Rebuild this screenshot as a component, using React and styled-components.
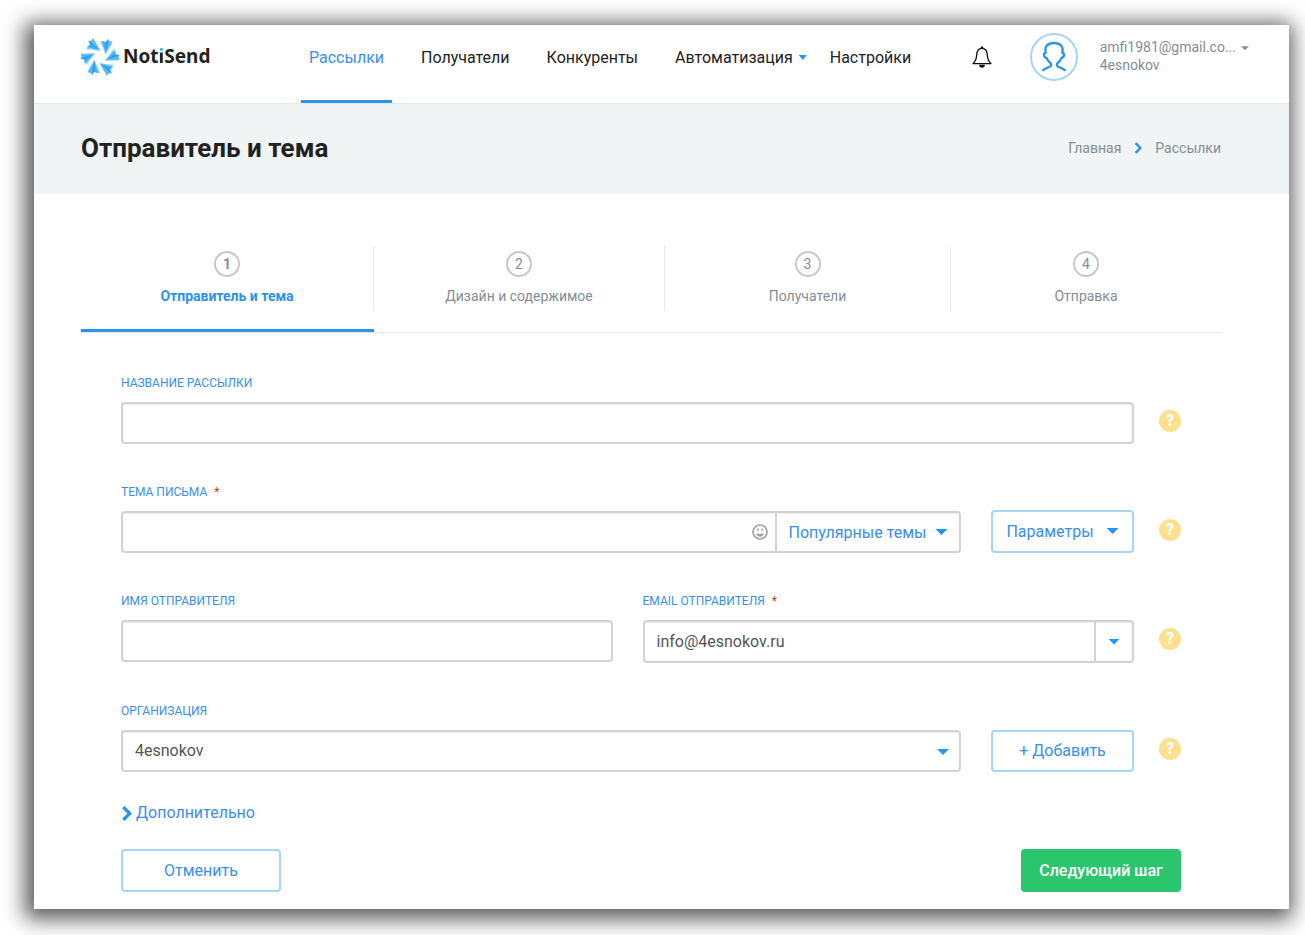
import { useState } from "react";
import styled, { createGlobalStyle } from "styled-components";

const colors = {
  blue: "#2b93e8",
  blueText: "#3a8fe8",
  blueLight: "#a6d5f8",
  dark: "#222222",
  gray: "#858e93",
  border: "#d0d4d6",
  line: "#e6e8ea",
  band: "#f0f4f5",
  green: "#2ac56c",
  yellow: "#fbe08e",
};

const NAV = [
  { title: "Рассылки", active: true },
  { title: "Получатели" },
  { title: "Конкуренты" },
  { title: "Автоматизация", dropdown: true },
  { title: "Настройки" },
];

const STEPS = [
  "Отправитель и тема",
  "Дизайн и содержимое",
  "Получатели",
  "Отправка",
];

const LogoMark = () => (
  <svg width="38" height="38" viewBox="-57 -57 114 114" aria-hidden="true">
    {[0, 60, 120, 180, 240, 300].map((angle) => (
      <g key={angle} transform={`rotate(${angle})`}>
        <path d="M17 -8 L0 -48 L11 -47 Z" fill="#7fd0fb" />
        <path d="M17 -8 L7 -49 L19 -44 Z" fill="#3aaef8" />
        <path d="M17 -8 L17 -45 L25 -55 L27 -44 Z" fill="#2b9cf2" />
        <path d="M17 -8 L25 -49 L38 -46 Z" fill="#55bdf9" />
      </g>
    ))}
  </svg>
);

const BellIcon = () => (
  <svg width="20" height="22" viewBox="0 0 60 66" fill="none" aria-hidden="true">
    <path
      d="M3 53 Q13 44 14 27 Q15 7 30 7 Q45 7 46 27 Q47 44 57 53 Z"
      stroke="#111"
      strokeWidth="4"
      strokeLinejoin="round"
    />
    <path d="M26 6 Q26 1 30 1 Q34 1 34 6 Z" fill="#111" />
    <path d="M21 56 H39 Q38 65 30 65 Q22 65 21 56 Z" fill="#111" />
  </svg>
);

const AvatarIcon = () => (
  <svg width="48" height="48" viewBox="0 0 144 144" fill="none" aria-hidden="true">
    <circle cx="72" cy="72" r="69" stroke={colors.blueLight} strokeWidth="6" />
    <path
      d="M37 113 Q44 107 58 102 Q68 97 60 89 Q52 82 50 75 Q41 74 42 62 L47 60 Q44 43 51 37 Q58 30 72 30 Q86 30 93 37 Q100 43 97 60 L102 62 Q103 74 94 75 Q92 82 84 89 Q76 97 86 102 Q100 107 107 113"
      stroke={colors.blue}
      strokeWidth="7"
      strokeLinejoin="round"
    />
  </svg>
);

const SmileIcon = () => (
  <svg width="16" height="16" viewBox="0 0 48 48" fill="none" aria-hidden="true">
    <circle cx="24" cy="24" r="21" stroke="#a3a3a3" strokeWidth="5" />
    <path d="M18 13 V21 M30 13 V21" stroke="#a3a3a3" strokeWidth="4" />
    <path d="M12 29 H36 Q33 38 24 38 Q15 38 12 29 Z" fill="#a3a3a3" />
  </svg>
);

const Chevron = ({ width, height }) => (
  <svg width={width} height={height} viewBox="0 0 10 14" fill="none" aria-hidden="true">
    <path d="M2 1 L8 7 L2 13" stroke={colors.blue} strokeWidth="3" />
  </svg>
);

const Help = () => (
  <HelpButton type="button" aria-label="Справка">
    ?
  </HelpButton>
);

const App = () => {
  const [email, setEmail] = useState("info@4esnokov.ru");

  return (
    <>
      <GlobalStyle />
      <Page>
        <Header>
          <Logo href="#">
            <LogoMark />
            <LogoText>
              Not<LogoI>i</LogoI>Send
            </LogoText>
          </Logo>
          <Nav>
            {NAV.map((item) => (
              <NavLink href="#" key={item.title} $active={item.active}>
                {item.title}
                {item.dropdown && <NavCaret />}
              </NavLink>
            ))}
          </Nav>
          <BellButton type="button" aria-label="Уведомления">
            <BellIcon />
          </BellButton>
          <User type="button">
            <AvatarIcon />
            <UserText>
              <span>
                amfi1981@gmail.co...
                <UserCaret />
              </span>
              <span>4esnokov</span>
            </UserText>
          </User>
        </Header>

        <TitleBand>
          <Title>Отправитель и тема</Title>
          <Breadcrumbs>
            <a href="#">Главная</a>
            <Chevron width={8} height={12} />
            <a href="#">Рассылки</a>
          </Breadcrumbs>
        </TitleBand>

        <Content>
          <Steps>
            {STEPS.map((step, i) => (
              <Step key={step} $active={i === 0}>
                <StepBody $last={i === STEPS.length - 1}>
                  <StepNumber>{i + 1}</StepNumber>
                  <StepLabel>{step}</StepLabel>
                </StepBody>
              </Step>
            ))}
          </Steps>

          <Form onSubmit={(e) => e.preventDefault()}>
            <Row>
              <Field>
                <Label htmlFor="name">Название рассылки</Label>
                <Control>
                  <Input id="name" type="text" />
                </Control>
              </Field>
              <Help />
            </Row>

            <Row>
              <WithButton>
                <Field>
                  <Label htmlFor="subject">
                    Тема письма <Required>*</Required>
                  </Label>
                  <Control>
                    <Input id="subject" type="text" />
                    <EmojiButton type="button" aria-label="Эмодзи">
                      <SmileIcon />
                    </EmojiButton>
                    <AddonButton type="button">
                      Популярные темы
                      <Caret />
                    </AddonButton>
                  </Control>
                </Field>
                <OutlineButton type="button">
                  Параметры
                  <Caret $gap={13} />
                </OutlineButton>
              </WithButton>
              <Help />
            </Row>

            <Row>
              <TwoFields>
                <Field>
                  <Label htmlFor="sender">Имя отправителя</Label>
                  <Control>
                    <Input id="sender" type="text" />
                  </Control>
                </Field>
                <Field>
                  <Label htmlFor="email">
                    Email отправителя <Required>*</Required>
                  </Label>
                  <Control $tall>
                    <Input
                      id="email"
                      type="text"
                      value={email}
                      onChange={(e) => setEmail(e.target.value)}
                    />
                    <ArrowButton type="button" aria-label="Выбрать email">
                      <Caret $gap={0} />
                    </ArrowButton>
                  </Control>
                </Field>
              </TwoFields>
              <Help />
            </Row>

            <Row>
              <WithButton>
                <Field>
                  <Label htmlFor="org">Организация</Label>
                  <Control>
                    <Select id="org">
                      <option>4esnokov</option>
                    </Select>
                    <SelectCaret />
                  </Control>
                </Field>
                <OutlineButton type="button" $short>
                  + Добавить
                </OutlineButton>
              </WithButton>
              <Help />
            </Row>

            <More href="#">
              <Chevron width={11} height={15} />
              Дополнительно
            </More>

            <Actions>
              <CancelButton type="button">Отменить</CancelButton>
              <NextButton type="submit">Следующий шаг</NextButton>
            </Actions>
          </Form>
        </Content>
      </Page>
    </>
  );
};

const GlobalStyle = createGlobalStyle`
  * {
    box-sizing: border-box;
  }
  body {
    margin: 0;
    padding: 25px 16px 26px 34px;
    background: #fff;
    font-family: Roboto, "Liberation Sans", sans-serif;
    color: ${colors.dark};
  }
  button, input, select {
    font-family: inherit;
  }
  a {
    color: inherit;
    text-decoration: none;
  }
`;

const Page = styled.div`
  background: #fff;
  box-shadow: -3px 4px 20px 6px rgba(0, 0, 0, 0.65);
`;
const Header = styled.header`
  display: flex;
  height: 79px;
  padding: 0 40px 0 47px;
  border-bottom: 1px solid ${colors.line};
`;
const Logo = styled.a`
  display: flex;
  align-items: center;
  gap: 4px;
  height: 64px;
  width: 220px;
`;
const LogoText = styled.span`
  padding-bottom: 2px;
  font-family: "Noto Sans", sans-serif;
  font-size: 19px;
  font-weight: 700;
  line-height: 24px;
`;
const LogoI = styled.span`
  color: transparent;
  background: linear-gradient(#35b0f5 0 10px, ${colors.dark} 10px);
  background-clip: text;
`;
const Nav = styled.nav`
  display: flex;
  flex: 1;
  gap: 21px;
`;
const NavLink = styled.a`
  position: relative;
  padding: 22px 8px 0;
  font-size: 16px;
  line-height: 22px;
  color: ${(props) => (props.$active ? colors.blueText : colors.dark)};
  border-bottom: 3px solid
    ${(props) => (props.$active ? colors.blue : "transparent")};
`;
const Caret = styled.span`
  display: inline-block;
  width: 12px;
  height: 6px;
  margin-left: ${(props) => props.$gap ?? 9}px;
  background: #2196f3;
  clip-path: polygon(0 0, 100% 0, 50% 100%);
`;
const NavCaret = styled(Caret)`
  position: absolute;
  top: 30px;
  right: -6px;
  width: 8px;
  height: 5px;
`;
const BellButton = styled.button`
  display: flex;
  align-items: center;
  height: 64px;
  padding: 0;
  border: none;
  background: none;
  cursor: pointer;
`;
const User = styled.button`
  display: flex;
  align-items: center;
  gap: 22px;
  height: 64px;
  margin-left: 38px;
  padding: 0;
  border: none;
  background: none;
  color: ${colors.gray};
  cursor: pointer;
`;
const UserText = styled.span`
  display: flex;
  flex-direction: column;
  padding-bottom: 2px;
  font-size: 14px;
  line-height: 18px;
  text-align: left;
`;
const UserCaret = styled(Caret)`
  width: 8px;
  height: 4px;
  margin-left: 5px;
  vertical-align: middle;
  background: ${colors.gray};
`;
const TitleBand = styled.div`
  display: flex;
  justify-content: space-between;
  align-items: center;
  height: 90px;
  padding: 0 68px 3px 47px;
  background: ${colors.band};
`;
const Title = styled.h1`
  margin: 0;
  font-size: 26px;
  font-weight: 700;
  line-height: 32px;
`;
const Breadcrumbs = styled.nav`
  display: flex;
  align-items: center;
  gap: 13px;
  font-size: 14px;
  line-height: 18px;
  color: ${colors.gray};
`;
const Content = styled.main`
  padding: 52px 68px 17px 47px;
`;
const Steps = styled.ol`
  display: grid;
  grid-template-columns: 293fr 291fr 286fr 270fr;
  margin: 0;
  padding: 0;
  list-style: none;
  border-bottom: 1px solid ${colors.line};
`;
const Step = styled.li`
  padding-bottom: 18px;
  border-bottom: 3px solid
    ${(props) => (props.$active ? colors.blue : "transparent")};
  font-weight: ${(props) => (props.$active ? 700 : 400)};
  color: ${(props) => (props.$active ? colors.blue : colors.gray)};
`;
const StepBody = styled.div`
  display: flex;
  flex-direction: column;
  align-items: center;
  gap: 10px;
  height: 65px;
  padding-top: 5px;
  border-right: ${(props) => (props.$last ? "none" : `1px solid ${colors.line}`)};
`;
const StepNumber = styled.span`
  width: 26px;
  height: 26px;
  border: 2px solid #c8c8c8;
  border-radius: 50%;
  font-size: 14px;
  line-height: 22px;
  text-align: center;
  color: ${colors.gray};
`;
const StepLabel = styled.span`
  font-size: 14px;
  line-height: 18px;
`;
const Form = styled.form`
  display: flex;
  flex-direction: column;
  padding: 42px 40px 0;
`;
const Row = styled.div`
  display: grid;
  grid-template-columns: 1fr 22px;
  gap: 25px;
  margin-bottom: 40px;
`;
const WithButton = styled.div`
  display: grid;
  grid-template-columns: 1fr 143px;
  align-items: end;
  gap: 30px;
`;
const TwoFields = styled.div`
  display: grid;
  grid-template-columns: 1fr 1fr;
  align-items: start;
  gap: 30px;
`;
const Field = styled.div`
  display: flex;
  flex-direction: column;
  gap: 11px;
  min-width: 0;
`;
const Label = styled.label`
  font-size: 12px;
  line-height: 16px;
  text-transform: uppercase;
  color: ${colors.blueText};
`;
const Required = styled.span`
  margin-left: 4px;
  color: #d0392b;
`;
const Control = styled.div`
  position: relative;
  display: flex;
  height: ${(props) => (props.$tall ? 43 : 42)}px;
  border: 2px solid ${colors.border};
  border-radius: 4px;
  box-shadow: inset 0 1px 1px rgba(0, 0, 0, 0.08);
`;
const Input = styled.input`
  flex: 1;
  min-width: 0;
  padding: 0 12px 1px;
  border: none;
  outline: none;
  background: none;
  font-size: 16px;
  color: #555;
`;
const Select = styled.select`
  flex: 1;
  padding: 0 12px 1px;
  border: none;
  outline: none;
  appearance: none;
  background: none;
  font-size: 16px;
  color: #555;
`;
const SelectCaret = styled(Caret)`
  position: absolute;
  top: 17px;
  right: 10px;
  pointer-events: none;
`;
const EmojiButton = styled.button`
  display: flex;
  align-items: center;
  padding: 0 7px 1px 0;
  border: none;
  background: none;
  cursor: pointer;
`;
const AddonButton = styled.button`
  display: flex;
  align-items: center;
  justify-content: center;
  width: 184px;
  padding: 0;
  border: none;
  border-left: 2px solid ${colors.border};
  background: none;
  font-size: 16px;
  color: ${colors.blueText};
  cursor: pointer;
`;
const ArrowButton = styled(AddonButton)`
  width: 38px;
`;
const OutlineButton = styled.button`
  display: flex;
  align-items: center;
  justify-content: center;
  height: ${(props) => (props.$short ? 42 : 43)}px;
  padding: 0 0 1px;
  border: 2px solid ${colors.blueLight};
  border-radius: 4px;
  background: #fff;
  font-size: 16px;
  color: ${colors.blueText};
  cursor: pointer;
`;
const CancelButton = styled(OutlineButton)`
  width: 160px;
`;
const NextButton = styled(CancelButton)`
  border: none;
  background: ${colors.green};
  font-weight: 500;
  color: #fff;
`;
const HelpButton = styled.button`
  width: 22px;
  height: 22px;
  margin-top: 35px;
  padding: 0;
  border: none;
  border-radius: 50%;
  background: ${colors.yellow};
  font-size: 16px;
  font-weight: 900;
  line-height: 22px;
  color: #fff;
  cursor: pointer;
`;
const More = styled.a`
  display: flex;
  align-items: center;
  align-self: flex-start;
  gap: 4px;
  margin-top: -9px;
  font-size: 16px;
  line-height: 20px;
  color: ${colors.blueText};
`;
const Actions = styled.div`
  display: flex;
  justify-content: space-between;
  margin-top: 26px;
`;

export default App;
